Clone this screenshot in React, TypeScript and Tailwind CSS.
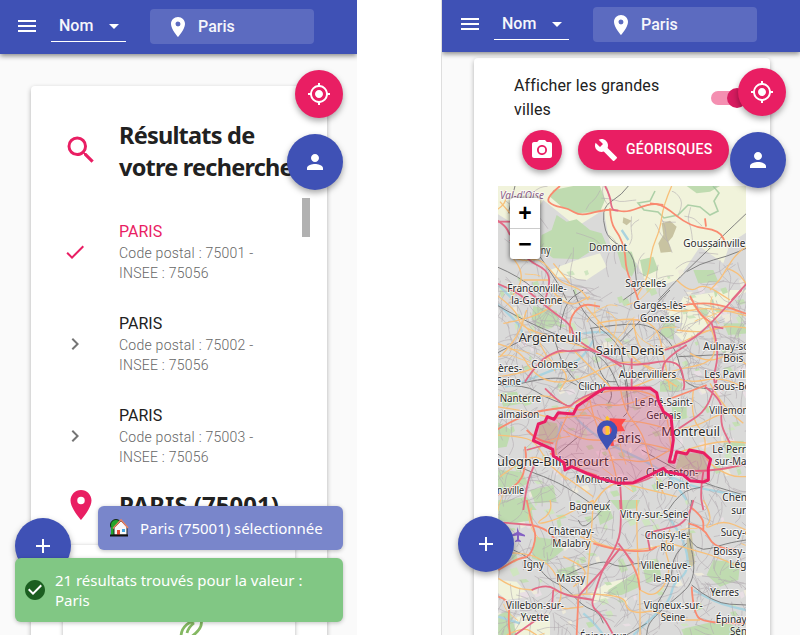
import React from "react";
import {
  MdMenu, MdPlace, MdMyLocation, MdPerson, MdAdd, MdSearch, MdCheck,
  MdChevronRight, MdPhotoCamera, MdBuild, MdArrowDropDown, MdCheckCircle,
} from "react-icons/md";

type Kind = "park" | "field" | "water" | "rail" | "sec" | "prim" | "trunk" | "forest";
type Shape = [Kind, string];

// Every sheet is surveyed at three units per screen pixel, from its own origin.
const sheets: { x: number; y: number; w: number; h: number; shapes: Shape[] }[] = [
  {
    x: 490, y: 180, w: 780, h: 360,
    shapes: [
      ["field", "M20 0H780V150L720 190L700 250L630 200L590 260L560 300L480 330L440 250L360 190L340 90L260 140L160 60L100 150L20 100Z"],
      ["field", "M180 270L260 240L330 220L350 260L290 300L200 290Z"],
      ["park", "M190 30L250 18H330L345 60L330 95L260 100L215 80L180 50Z"],
      ["park", "M200 105L230 125L260 118L300 150L335 160L350 195L300 215L265 238L190 235L150 205L155 165L185 150Z"],
      ["park", "M380 210L425 215L440 260L425 290L395 260Z"],
      ["park", "M590 18H690L660 35L620 40Z"],
      ["park", "M450 240l40 -10l15 40l-45 20z"],
      ["park", "M610 270l60 0l15 35l-60 5z"],
      ["forest", "M515 130L540 122L560 140L548 170L535 185L545 215L512 218L505 190L520 165Z"],
      ["forest", "M400 112l25 10l-15 14l-12 -8z"],
      ["water", "M395 150L415 180M20 310L70 360"],
      ["sec", "M545 18L520 75L510 150L485 205L475 290L440 350"],
      ["sec", "M780 190L740 220L710 265L690 300L660 330M710 265L745 275L780 330"],
      ["sec", "M20 90L50 70L45 30M30 65L60 100"],
      ["sec", "M65 230L95 245L150 235L190 280L215 310L270 325L295 360M65 230L110 280L60 360M190 250L240 310M100 300L180 300"],
      ["sec", "M560 300L600 340L640 310L720 360"],
      ["prim", "M210 18L165 55L190 78L235 85L270 108L330 92L370 88L410 98L480 70L520 75L600 140L690 150L710 200"],
      ["prim", "M520 75L480 70M645 115L648 140"],
      ["prim", "M360 85L362 130L388 165L405 210L408 270L435 330L445 360"],
      ["trunk", "M345 18L360 45L365 90L385 92M20 120L45 135L60 165M60 180L110 240L172 270L180 310L165 360"],
      ["trunk", "M20 310L70 330L110 360M780 300L725 360"],
      ["trunk", "M20 125H60"],
      ["rail", "M415 18L395 45L345 75L338 120L355 180L430 215L440 310"],
      ["rail", "M780 90L580 280L505 360M590 275L630 250L710 230L780 200"],
      ["rail", "M75 18L55 100M20 260L90 290L170 360M150 230L205 310L230 360M400 360L470 310"],
    ],
  },
  {
    x: 490, y: 290, w: 780, h: 300,
    shapes: [
      ["field", "M530 65L565 50L580 20L720 0L780 0L740 20L690 80L640 115L585 160L555 130L580 100L555 95Z"],
      ["park", "M130 48l70 15l10 40l-60 15l-25 -30z"],
      ["park", "M520 100l35 0l-5 50l-40 -15z"],
      ["park", "M510 275l45 -10l25 20l-15 20l-55 0z"],
      ["park", "M700 100l60 0l15 30l-60 5z"],
      ["water", "M20 40L60 75L100 120L90 150M280 130L350 120L390 155M310 150L280 210L200 235L90 280L45 290"],
      ["sec", "M20 15L80 60L90 110L180 140L240 160L320 180M40 100L150 80L210 20M185 0L230 55L300 20M280 40L330 100L375 140L430 205L490 245L560 290"],
      ["sec", "M30 200L80 150L110 60M20 160L90 180L120 240L180 280L270 270L345 230L430 210L520 250L600 280L690 260L780 300"],
      ["sec", "M320 100L420 80L500 105L520 190L540 300M430 90L440 180L500 195L680 105L780 115M500 50L560 70L660 50L780 80"],
      ["sec", "M140 130L160 200L240 250L210 300M250 180L330 260L370 300M600 190L650 220L720 190L780 230M560 120L630 130L690 110"],
      ["sec", "M20 260L120 250L180 190L270 180M610 45L660 100L680 170L660 220L550 240L460 280L400 300"],
      ["prim", "M600 18L625 70L665 100M560 50L600 40L680 40L780 75"],
      ["prim", "M240 130L235 90L275 40L330 50"],
      ["trunk", "M110 0L180 60L245 105L250 145L350 205L420 230L565 205L585 280L580 300"],
      ["trunk", "M755 0L665 100L600 155L525 180M665 100L690 180L665 280L700 300"],
      ["trunk", "M105 275L145 215L205 180L245 185L310 175L395 230M590 165L525 205L515 250M670 110L700 115M425 205L425 300"],
      ["rail", "M20 45L90 85L190 130L260 160L350 210L390 300M250 0L275 75L385 155L400 220L415 300"],
      ["rail", "M300 115L420 98L490 110L540 155L565 200L580 290L700 300M565 200L770 190M540 0L390 155"],
      ["rail", "M305 115L310 180L340 275L380 275M210 120L220 40L280 0M20 190L110 140L190 125L210 210L260 280L310 300M95 280L200 255L260 285"],
    ],
  },
  {
    x: 490, y: 380, w: 780, h: 360,
    shapes: [
      ["park", "M20 125L65 150L50 200L20 205Z"],
      ["park", "M25 270l70 5l20 35l-60 30l-35 -5z"],
      ["park", "M150 120l50 10l15 45l-45 25l-25 -25z"],
      ["park", "M570 220l70 0l15 45l-35 25l-65 -20z"],
      ["park", "M120 330l70 -15l10 50l-65 5z"],
      ["park", "M545 80l45 0l0 35l-40 8z"],
      ["park", "M25 40l55 -5l20 35l-60 10z"],
      ["park", "M20 365L110 350L140 390H20Z"],
      ["park", "M700 190l60 -8l10 25l-60 15z"],
      ["water", "M215 125L200 175L195 240L230 265M235 90L285 145L370 200L470 245L540 290L620 325L780 350M540 290L590 360"],
      ["sec", "M20 45L90 60L180 40L260 100L320 70L390 80L480 50M20 80L120 95L200 120L300 100L350 130L430 120L530 145"],
      ["sec", "M240 90L210 150L190 220L230 270L310 250L390 235L470 250L540 210M255 70L320 30L480 30L530 90L545 220"],
      ["sec", "M300 60L310 120L350 190L370 250L385 320M390 20L400 90L460 160L480 250L520 340M220 150L270 180L350 180L470 190L545 210"],
      ["sec", "M20 165L100 170L140 190L180 260L240 300L310 350M30 290L110 230L160 235L230 300M550 150L620 140L690 100L780 80M560 220L670 180L780 190"],
      ["sec", "M610 30L600 110L650 170L640 240L720 290L780 290M660 10L700 80L760 130M300 390L350 300L440 320L560 350"],
      ["prim", "M20 150L100 100L240 80M110 150L140 180L190 190M180 220L240 260L330 290M20 345L90 320L110 240L105 200M530 60L650 15"],
      ["trunk", "M110 210L165 195M100 390L110 310L135 250M165 25L230 90L260 60L330 30M390 305L395 390M370 310L420 315L470 300L525 270L660 275L780 250"],
      ["trunk", "M545 160L590 130L650 90L680 0M640 275L630 340L640 390M645 20L700 60L690 130L720 190"],
      ["rail", "M405 0L420 90L400 110M205 220L265 170M455 210L560 270L640 310L780 350M350 0L370 40L355 70"],
      ["rail", "M20 220L80 260L190 300L260 340L330 390M535 390L570 335L640 320M20 15L110 15L160 50L230 75"],
    ],
  },
  {
    x: 440, y: 500, w: 930, h: 405,
    shapes: [
      ["field", "M450 280L500 250L600 225L600 250L540 285L460 310Z"],
      ["field", "M175 240L230 245L270 290L200 300L175 280Z"],
      ["field", "M230 350L330 340L330 405H220Z"],
      ["park", "M175 0L270 0L280 60L220 70L175 60Z"],
      ["park", "M285 110L350 120L370 150L320 190L275 175Z"],
      ["park", "M505 270L585 220L600 260L545 285L505 285Z"],
      ["park", "M175 345L210 330L230 405H175Z"],
      ["park", "M735 385L800 370L850 360L918 400V405H730Z"],
      ["park", "M610 210l45 -30l10 55l-45 15z"],
      ["park", "M470 25l35 -10l15 40l-40 20z"],
      ["park", "M820 180l80 10l-5 50l-55 20l-40 -35z"],
      ["park", "M510 0l90 0l-10 25l-55 5z"],
      ["park", "M350 210l50 -12l15 25l-45 20z"],
      ["water", "M680 45L720 95L745 170L740 220L700 250L690 300L640 350L580 405M430 340L460 365L490 405M760 270L830 310L918 330M175 350L240 370"],
      ["sec", "M330 0L340 35L280 75L350 60L460 0M460 0L455 90L445 200L440 280M590 0L590 120L600 270L600 405"],
      ["sec", "M175 235L220 265L280 270M340 270L390 290L440 280L555 290L560 330L600 340L640 330L700 360L780 360M420 110L520 150L610 150L690 130"],
      ["sec", "M690 90L670 140L690 190L680 250L640 290L600 270M790 0L820 50L790 90L850 60L918 90M690 130L760 150L830 170L918 210"],
      ["sec", "M175 160L250 155L330 190L370 270L350 330L430 320M200 405L250 380L290 405M400 260L440 230L430 200L370 170"],
      ["prim", "M260 0L275 70L290 110L270 170L235 175L175 210M275 75L320 85L350 125"],
      ["prim", "M175 290L210 300L205 360L210 405M415 295L410 405M460 130L520 150L625 155L650 140"],
      ["prim", "M745 70L790 80L820 140L890 150M755 260L760 345L800 368L918 370M750 20L790 50L790 90M555 155L590 210L600 270"],
      ["trunk", "M540 0L545 60L535 130L490 200L460 290L455 320L490 350L520 405"],
      ["trunk", "M190 68L275 75M535 130L580 190M760 0L745 70L660 90L620 100L630 150M275 270L320 250L370 285L460 300M225 405L300 350L320 345"],
      ["trunk", "M540 145L480 220L440 260L415 290M340 270L335 330"],
      ["rail", "M755 0L740 90L765 190L755 250L720 285L670 325L625 370L620 405M740 100L765 160L860 130L918 120"],
      ["rail", "M220 150L270 170L325 240L375 260L430 320L475 335L490 370M380 225L480 175L540 205L600 185L640 205M755 255L820 310L918 315"],
      ["rail", "M415 60L425 90L470 50L510 0M620 370L560 405M740 130L700 160L695 240L640 330"],
      ["forest", "M740 95l15 5l10 90l-15 15l-10 -55z"],
    ],
  },
];

const roadStyle: Record<string, [string, number]> = {
  sec: ["#f8c07a", 3.9],
  prim: ["#f98a70", 5.4],
  trunk: ["#e26a86", 5.4],
  rail: ["#7d7d7d", 2.9],
  water: ["#aad3df", 7],
};
const areaFill: Record<string, string> = { park: "#bfdbb0", field: "#f1f3db", forest: "#c8c3a1" };

// Rounds the corners of a polyline by curving through its segment midpoints.
function smooth(d: string) {
  if (/[HVlhz]/.test(d)) return d;
  return d
    .split("M")
    .filter(Boolean)
    .map((part) => {
      const p = part.split("L").map((s) => s.trim().split(" ").map(Number));
      let out = `M${p[0][0]} ${p[0][1]}`;
      for (let i = 1; i < p.length - 1; i++) {
        out += `Q${p[i][0]} ${p[i][1]} ${(p[i][0] + p[i + 1][0]) / 2} ${(p[i][1] + p[i + 1][1]) / 2}`;
      }
      const last = p[p.length - 1];
      return out + `L${last[0]} ${last[1]}`;
    })
    .join("");
}

function makeRandom(seed: number) {
  let s = seed;
  return () => ((s = (s * 1664525 + 1013904223) >>> 0) / 4294967296);
}
const rnd = makeRandom(77);

// Local streets: short, gently turning polylines.
function makeStreets(count: number, steps: number, step: number) {
  return Array.from({ length: count }, () => {
    let x = 490 + rnd() * 264;
    let y = 180 + rnd() * 460;
    if (y < 275 && rnd() < 0.8) y += 120;
    let a = rnd() * Math.PI * 2;
    let d = `M${x.toFixed(1)} ${y.toFixed(1)}`;
    const n = 2 + Math.floor(rnd() * steps);
    for (let i = 0; i < n; i++) {
      a += (rnd() - 0.5) * 1.3;
      const l = step * (0.5 + rnd());
      x += Math.cos(a) * l;
      y += Math.sin(a) * l;
      d += `L${x.toFixed(1)} ${y.toFixed(1)}`;
    }
    return smooth(d);
  });
}
const streets = makeStreets(800, 4, 7);
const avenues = makeStreets(30, 4, 8);

const patches = Array.from({ length: 260 }, (_, i) => {
  const x = 494 + rnd() * 250;
  const y = 270 + rnd() * 360;
  const w = 2 + rnd() * 6;
  const h = 2 + rnd() * 5;
  return {
    d: `M${x} ${y}l${w} ${-h * 0.3}l${w * 0.4} ${h}l${-w * 0.9} ${h * 0.4}z`,
    fill: ["#c5dfb5", "#cfe5c0", "#e9dfe4", "#c2deb2", "#eeeadb"][i % 5],
  };
});

// text, left, baseline, width, size
const labels: [string, number, number, number, number][] = [
  ["ny", 540.7, 253.5, 9.8, 10], ["Domont", 589, 251, 38, 10], ["Goussainville", 683.3, 246.5, 62, 10],
  ["Sarcelles", 625.3, 287, 41, 10], ["Franconville-", 507.3, 291.5, 59.4, 10], ["la-Garenne", 511.3, 304, 51, 10],
  ["Garges-lès-", 633.3, 309, 52.7, 10], ["Gonesse", 640, 321.5, 40, 10], ["Argenteuil", 518.7, 341.8, 62.6, 12.5],
  ["Saint-Denis", 595.7, 355, 68.6, 12.5], ["Aulnay-sous-", 703.3, 349.8, 60, 10], ["Bois", 723.3, 362, 20, 10],
  ["Colombes", 531.3, 368.3, 46.7, 10], ["ères-", 498, 372.3, 24, 10], ["Seine", 496.7, 385, 24, 10],
  ["Aubervilliers", 618.7, 377.5, 57.6, 10], ["Les Pavillons-", 704.3, 377.8, 64, 10], ["sous-Bois", 713.7, 390, 44, 10],
  ["Clichy", 578.3, 390.3, 27, 10], ["Nanterre", 499.7, 401.8, 41.3, 10], ["Le Pré-Saint-", 634.7, 405.8, 58, 10],
  ["Gervais", 646.3, 418.6, 34.7, 10], ["Villemomble", 709.3, 413.8, 56, 10], ["almaison", 498, 417.6, 41.3, 10],
  ["Montreuil", 661.3, 435.8, 58.7, 12.5], ["Paris", 608.5, 442.5, 32.5, 13.5], ["Le Perreux-", 712.3, 453.4, 54, 10],
  ["sur-Marne", 714.7, 465, 47, 10], ["ulogne-Billancourt", 497, 465.8, 111.7, 12.5],
  ["Charenton-", 646, 475.8, 52.3, 10], ["le-Pont", 656, 488.5, 33, 10], ["Montrouge", 575.7, 483.2, 52.3, 10],
  ["naville", 497, 494.2, 27, 10], ["Chenn", 722.3, 501.2, 31, 10], ["Bagneux", 569.3, 509.7, 41, 10],
  ["sur-", 731.3, 513.7, 18, 10], ["Vitry-sur-Seine", 620.3, 517.6, 68, 10], ["Châtenay-", 547.7, 534.5, 46.6, 10],
  ["Malabry", 552.3, 546.8, 38, 10], ["Choisy-le-", 644.7, 538.8, 44.6, 10], ["Roi", 660.3, 551.2, 14, 10],
  ["Sucy-en", 720.7, 536.2, 36, 10], ["Boissy-", 713.3, 555.2, 32, 10], ["Lég", 729.3, 568.2, 17, 10],
  ["Igny", 523.3, 568.2, 20.7, 10], ["Massy", 556.3, 581.6, 29, 10], ["Villeneuve-", 640.7, 569.2, 50, 10],
  ["le-Roi", 653.3, 582.2, 26, 10], ["Yerres", 710.3, 595.8, 28.7, 10], ["Villebon-sur-", 506, 608.5, 58, 10],
  ["Yvette", 520.7, 620.8, 28.3, 10], ["Vigneux-sur-", 643.7, 608.5, 59, 10], ["Seine", 660.7, 620.8, 24.6, 10],
  ["Épinay", 715.7, 623, 31, 10], ["Sénart", 730, 635, 30, 10], ["Épinay-sur-", 580, 639.5, 49, 10],
];

const PARIS =
  "M330 32L345 25L480 24L500 38L505 62L520 95L543 110L550 180L545 215L538 245L552 247L560 215L590 222L598 210L640 218L662 238L655 265L655 300L640 306L600 302L580 285L530 275L520 265L480 285L430 308L385 310L330 295L290 280L245 260L225 270L222 248L190 228L188 208L130 182L145 132L165 125L172 110L192 118L205 98L250 102L262 78Z";

function CityMap() {
  const lines = (k: Kind) =>
    sheets.map((s, i) => (
      <g key={k + i} transform={`translate(${s.x} ${s.y}) scale(.33333)`}>
        {s.shapes.filter((p) => p[0] === k).map(([, d], j) =>
          areaFill[k] ? (
            <path key={j} d={d} fill={areaFill[k]} />
          ) : (
            <path key={j} d={smooth(d)} fill="none" stroke={roadStyle[k][0]} strokeWidth={roadStyle[k][1]} strokeLinejoin="round" />
          )
        )}
      </g>
    ));
  return (
    <svg viewBox="498 186 248 449" className="block h-[449px] w-[248px]" fontFamily="'Noto Sans', sans-serif">
      <rect x="498" y="186" width="248" height="449" fill="#dadad9" />
      {lines("field")}
      {patches.map((p, i) => <path key={i} d={p.d} fill={p.fill} />)}
      {lines("park")}
      {lines("forest")}
      {lines("water")}
      <g fill="none" stroke="#b3adb2" strokeWidth=".6">
        {streets.map((d, i) => <path key={i} d={d} />)}
      </g>
      <path d="M655 191l-5 10l-12 2l6 7l14 2l6 6l14-3l10-10l12 2l10 8l8-4l-4-10l5-8l-6-7" fill="none" stroke="#9cc79a" strokeWidth="1.6" opacity=".8" />
      {lines("rail")}
      <g fill="none" stroke="#fcc67c" strokeWidth=".9">
        {avenues.map((d, i) => <path key={i} d={d} />)}
      </g>
      {lines("sec")}
      {lines("prim")}
      {lines("trunk")}
      <path d="M517 527l2 5l6 3v1.500l-6-1v4l2 1.500v1l-3-.5l-3 .5v-1l2-1.500v-4l-6 1v-1.500l6-3z" fill="#8461c4" />
      <g fill="#2d2d2d" stroke="#fff" strokeOpacity=".7" strokeWidth="2" paintOrder="stroke" strokeLinejoin="round">
        <text x="500" y="198.500" fontSize="10" fontStyle="italic" fill="#8d618b" textLength="44">Val-d'Oise</text>
        {labels.map(([t, x, y, w, s], i) => (
          <text key={i} x={x} y={y} fontSize={s} textLength={w} lengthAdjust="spacingAndGlyphs">{t}</text>
        ))}
      </g>
      <g transform="translate(490 380) scale(.33333)">
        <path d={PARIS} fill="#e91e63" fillOpacity=".22" stroke="#e91e63" strokeWidth="9" strokeLinejoin="round" />
        <path d="M358 115L408 117L395 135L405 153L366 155L372 197L362 198Z" fill="#ff4b4b" />
        <path d="M336 136h16v32h-16z" fill="#f39a92" />
        <path d="M347 112l5 -5l6 8v53h-11z" fill="#ffc52e" />
        <path fillRule="evenodd" d="M351 210C340 190 321 172 321 151A30 30 0 0 1 382 151C382 172 362 190 351 210ZM351 137A14 14 0 1 0 351 165A14 14 0 1 0 351 137Z" fill="#3f51b5" />
      </g>
    </svg>
  );
}

function Toolbar({ tall }: { tall?: boolean }) {
  return (
    <header className={`relative z-10 flex shrink-0 items-center bg-[#3f51b5] text-[#f5f6fb] shadow-[0_2px_5px_rgba(0,0,0,.45)] ${tall ? "h-[54px] pl-[15px]" : "h-[52px] pb-[2px] pl-4"}`}>
      <MdMenu size={24} className="-mt-[2px] shrink-0 text-white" />
      <div className="-mt-[1px] ml-3 flex h-[31px] w-[75px] items-center justify-between border-b border-white pl-2 font-[Roboto,sans-serif] text-[16px] font-medium">
        <span>Nom</span>
        <MdArrowDropDown size={24} className="text-white" />
      </div>
      <div className="-mt-[1px] ml-6 flex h-[35px] w-[164px] items-center gap-2 rounded-[4px] bg-[#5c6bc0] pl-4 font-[Roboto,sans-serif] text-[16px] font-medium">
        <MdPlace size={24} className="text-white" />
        <span>Paris</span>
      </div>
    </header>
  );
}

function FloatingButtons({ className }: { className: string }) {
  return (
    <div className={`absolute z-20 flex flex-col items-end gap-4 text-white ${className}`}>
      <button className="flex size-12 items-center justify-center rounded-full bg-[#e91e63] shadow-[0_3px_6px_rgba(0,0,0,.35)]"><MdMyLocation size={24} /></button>
      <button className="flex size-14 items-center justify-center rounded-full bg-[#3f51b5] shadow-[0_3px_6px_rgba(0,0,0,.35)]"><MdPerson size={24} /></button>
    </div>
  );
}

function AddButton({ className }: { className: string }) {
  return (
    <button className={`absolute flex size-14 items-center justify-center rounded-full bg-[#3f51b5] text-white shadow-[0_3px_6px_rgba(0,0,0,.35)] ${className}`}><MdAdd size={24} /></button>
  );
}

const results = [
  { code: "75001", selected: true },
  { code: "75002", selected: false },
  { code: "75003", selected: false },
];

const cardShadow = "shadow-[0_2px_5px_rgba(0,0,0,.3)]";

function ResultsPhone() {
  return (
    <section className="relative flex h-[635px] w-[357px] shrink-0 flex-col overflow-hidden bg-[#fafafa]">
      <Toolbar tall />
      <main className={`ml-[31px] mt-8 flex h-[600px] w-[296px] shrink-0 flex-col rounded-[4px] bg-white ${cardShadow}`}>
        <div className="flex h-[112px] shrink-0 items-start pl-8 pt-[33px]">
          <MdSearch size={36} className="mt-[13px] shrink-0 text-[#e91e63]" />
          <h1 className="ml-5 whitespace-nowrap font-['Noto_Sans',sans-serif] text-[23.5px] font-bold leading-[32px] tracking-[-0.78px] text-[#212121]">Résultats de<br />votre recherche</h1>
        </div>
        <div className="flex h-[276px] shrink-0 justify-between pr-[17px]">
          <ul className="flex-1">
            {results.map((r) => (
              <li key={r.code} className="flex h-[92px] items-center pl-8 pt-[16px]">
                {r.selected ? <MdCheck size={24} className="text-[#e91e63]" /> : <MdChevronRight size={24} className="text-[#757575]" />}
                <div className="ml-8 font-[Roboto,sans-serif]">
                  <div className={`text-[16px] leading-6 ${r.selected ? "text-[#e91e63]" : "text-[#212121]"}`}>PARIS</div>
                  <div className="-mt-px mb-px whitespace-nowrap text-[14px] font-light leading-5 tracking-[0.25px] text-[#666]">Code postal : {r.code} -<br />INSEE : 75056</div>
                </div>
              </li>
            ))}
          </ul>
          <div className="h-[39px] w-2 bg-[#b1b1b1]" />
        </div>
        <div className="flex h-[71px] shrink-0 items-start pl-8 pt-[13px]">
          <MdPlace size={36} className="shrink-0 text-[#e91e63]" />
          <h2 className="ml-5 mt-[2px] whitespace-nowrap font-['Noto_Sans',sans-serif] text-[24px] font-bold leading-8 text-[#212121]">PARIS (75001)</h2>
        </div>
        <div className="mx-8 flex h-[140px] justify-center rounded-[4px] bg-white pt-[67px] shadow-[0_1px_4px_rgba(0,0,0,.3)]">
          <svg viewBox="0 0 28 32" className="ml-6 h-8 w-7" fill="none" stroke="#84b862" strokeWidth="2.800">
            <path d="M4 25C4 15 12 8 24 8C26 14 21 20 14 25M10 21C11 17 13 14 17 11" />
          </svg>
        </div>
      </main>
      <FloatingButtons className="left-[287px] top-[70px]" />
      <AddButton className="left-[15px] top-[518px]" />
      <div className="absolute left-[15px] top-[506px] z-30 flex w-[328px] flex-col items-end gap-2 font-['Noto_Sans',sans-serif] text-[15px] leading-5 tracking-[-0.03px] text-white">
        <div className="flex h-11 w-[245px] items-center rounded-[6px] bg-[#7986cb] pl-[11px] shadow-[0_1px_4px_rgba(0,0,0,.25)]">
          <svg viewBox="0 0 20 20" className="size-5 shrink-0">
            <circle cx="7" cy="7" r="5.500" fill="#23a52a" stroke="#142414" />
            <path d="M2 9h5v8H2z" fill="#23a52a" />
            <path d="M5 10L12 3L18 9V17H5Z" fill="#fafafa" stroke="#222" />
            <path d="M4 10.500L12 2L19 10" fill="none" stroke="#e58363" strokeWidth="1.600" />
            <path d="M8 12h3v5H8z" fill="#e44d37" /><path d="M13 11h3v3h-3z" fill="#47a8e0" />
            <path d="M1 17.500h18" stroke="#111" strokeWidth="2" />
          </svg>
          <span className="ml-[11px] whitespace-nowrap">Paris (75001) sélectionnée</span>
        </div>
        <div className="flex h-16 w-[328px] items-center rounded-[6px] bg-[#81c784] pl-2 shadow-[0_1px_4px_rgba(0,0,0,.25)]">
          <span className="relative flex size-6 shrink-0 items-center justify-center">
            <span className="absolute size-4 rounded-full bg-white" />
            <MdCheckCircle size={24} className="relative text-[#1b5e20]" />
          </span>
          <span className="ml-2 whitespace-nowrap">21 résultats trouvés pour la valeur :<br />Paris</span>
        </div>
      </div>
    </section>
  );
}

function MapPhone() {
  return (
    <section className="relative ml-[84px] flex h-[635px] w-[359px] shrink-0 flex-col overflow-hidden border-l border-[#dedede] bg-[#fafafa]">
      <Toolbar />
      <main className={`ml-8 mt-[6px] flex h-[640px] w-[296px] shrink-0 flex-col rounded-[4px] bg-white ${cardShadow}`}>
        <div className="flex h-[72px] shrink-0 items-start pl-10 pt-4">
          <p className="w-[197px] shrink-0 font-[Roboto,sans-serif] text-[16px] leading-6 tracking-[0.14px] text-[#212121]">Afficher les grandes<br />villes</p>
          <div className="mt-[17px] flex h-[14px] w-9 shrink-0 items-center justify-end rounded-full bg-[#f48fb1]">
            <span className="size-5 shrink-0 rounded-full bg-[#d81b60]" />
          </div>
        </div>
        <div className="flex h-14 shrink-0 items-start gap-4 pl-12 text-white">
          <button className="flex size-10 items-center justify-center rounded-full bg-[#e91e63] shadow-[0_3px_6px_rgba(0,0,0,.35)]"><MdPhotoCamera size={24} /></button>
          <button className="flex h-10 w-[151px] items-center rounded-full bg-[#e91e63] pb-px pl-4 font-[Roboto,sans-serif] text-[14px] font-medium tracking-[0.3px] shadow-[0_3px_6px_rgba(0,0,0,.35)]"><MdBuild size={24} /><span className="ml-2">GÉORISQUES</span></button>
        </div>
        <div className="relative ml-6 w-[248px]">
          <CityMap />
          <div className="absolute left-3 top-3 flex w-[30px] flex-col rounded-[3px] bg-white text-center font-['Liberation_Sans',sans-serif] text-[23px] font-bold leading-[30px] text-black shadow-[0_1px_5px_rgba(0,0,0,.65)]">
            <span className="h-[31px] border-b border-[#ccc]">+</span>
            <span className="h-[30px]">−</span>
          </div>
        </div>
      </main>
      <FloatingButtons className="left-[288px] top-[68px]" />
      <AddButton className="left-4 top-[516px]" />
    </section>
  );
}

export default function App() {
  return (
    <div className="flex h-[635px] w-[800px] overflow-hidden bg-white">
      <ResultsPhone />
      <MapPhone />
    </div>
  );
}
